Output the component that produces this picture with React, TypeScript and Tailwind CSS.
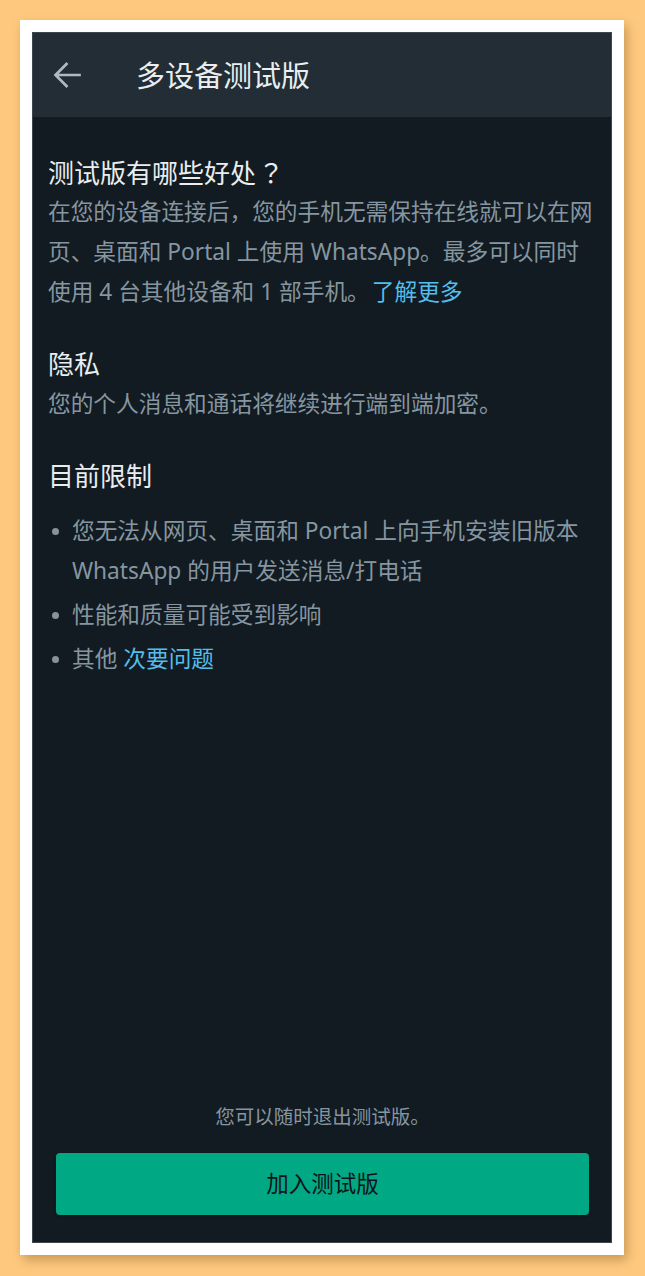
import React from "react";

const font = {
    fontFamily: '"Noto Sans", "Noto Sans CJK SC", Roboto, sans-serif',
};

const cjk = {
    fontFamily: '"Noto Sans CJK JP", "Noto Sans CJK SC", sans-serif',
};

function BackArrow() {
    return (
        <svg width="28" height="26" viewBox="0 0 28 26" fill="none" className="block">
            <path
                d="M26.5 13H3 M13.5 2 L2.5 13 L13.5 24"
                stroke="#aebac1"
                strokeWidth="2.7"
                strokeLinecap="square"
                strokeLinejoin="miter"
            />
        </svg>
    );
}

function Bullet({ children }: { children: React.ReactNode }) {
    return (
        <li className="flex">
            <span className="flex h-[40px] w-[24px] shrink-0 items-center">
                <span className="ml-[4px] block h-[7px] w-[7px] rounded-full bg-[#86939b]" />
            </span>
            <span className="flex-1">{children}</span>
        </li>
    );
}

export default function App() {
    return (
        <div
            className="min-h-[1276px] w-[645px] bg-[#fec97f] pl-[20px] pt-[20px]"
            style={font}
        >
            <div className="w-[604px] bg-white px-[12px] py-[12px] shadow-[3px_5px_10px_rgba(120,80,20,0.4)]">
                <div className="flex h-[1211px] w-[580px] flex-col border border-[#3e474e] bg-[#121b22]">
                    {/* header */}
                    <div className="flex h-[84px] shrink-0 items-center bg-[#222d35]">
                        <div className="ml-[20px]">
                            <BackArrow />
                        </div>
                        <h1 className="ml-[55px] text-[29px] leading-none text-[#e9edef]">
                            多设备测试版
                        </h1>
                    </div>

                    {/* content */}
                    <div className="flex flex-1 flex-col pl-[15px] pr-[14px] pt-[35px]">
                        <h2 className="h-[40px] text-[26px] leading-[40px] text-[#e9edef]">
                            测试版有哪些好处<span className="ml-[2px]" style={cjk}>？</span>
                        </h2>
                        <p className="text-[22.7px] leading-[40px] text-[#8696a0]">
                            在您的设备连接后，您的手机无需保持在线就可以在网页、桌面和 Portal 上使用 WhatsApp。最多可以同时使用 4 台其他设备和 1 部手机。<span className="ml-[2px] text-[#53bdeb]">了解更多</span>
                        </p>

                        <h2 className="mt-[32px] text-[26px] leading-[40px] text-[#e9edef]">
                            隐私
                        </h2>
                        <p className="text-[22.7px] leading-[40px] text-[#8696a0]">
                            您的个人消息和通话将继续进行端到端加密。
                        </p>

                        <h2 className="mt-[32px] text-[26px] leading-[40px] text-[#e9edef]">
                            目前限制
                        </h2>
                        <ul className="mt-[15px] flex flex-col gap-[4px] text-[22.7px] leading-[40px] text-[#8696a0]">
                            <Bullet>
                                您无法从网页、桌面和 Portal 上向手机安装旧版本 WhatsApp 的用户发送消息/打电话
                            </Bullet>
                            <Bullet>性能和质量可能受到影响</Bullet>
                            <Bullet>
                                其他 <span className="text-[#53bdeb]">次要问题</span>
                            </Bullet>
                        </ul>

                        <div className="flex-1" />

                        <p className="text-center text-[19.5px] leading-[28px] text-[#8696a0]">
                            您可以随时退出测试版。
                        </p>
                        <button className="mb-[27px] ml-[8px] mr-[8px] mt-[22px] flex h-[62px] items-center justify-center rounded-[4px] bg-[#00a884] text-[22.5px] text-[#0b141a] shadow-[0_1px_3px_rgba(0,0,0,0.4)]">
                            加入测试版
                        </button>
                    </div>
                </div>
            </div>
        </div>
    );
}
